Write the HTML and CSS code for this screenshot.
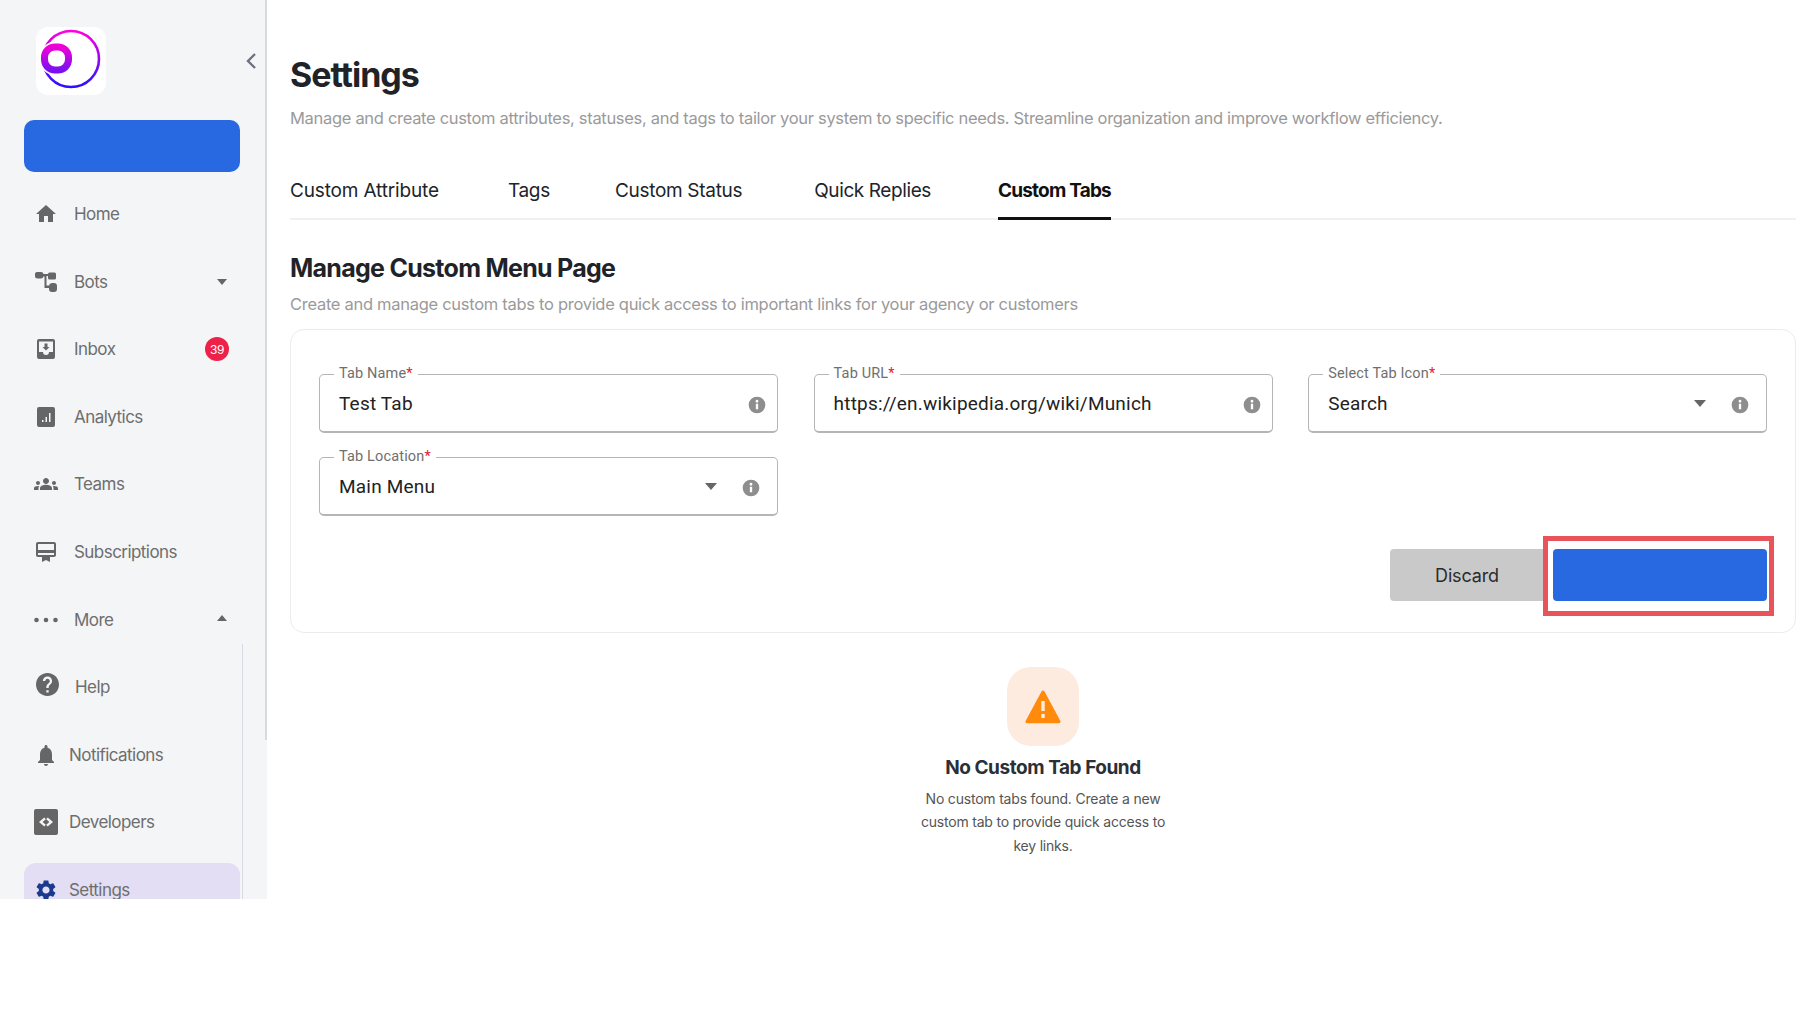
FILE: index.html
```html
<!DOCTYPE html>
<html lang="en">
<head>
<meta charset="utf-8">
<title>Settings</title>
<link rel="stylesheet" href="styles.css">
</head>
<body>
<div class="app">
  <aside class="sidebar">
    <div class="scroll-thumb"></div>
    <div class="brand">
      <div class="logo">
        <svg viewBox="0 0 70 68" width="70" height="68">
          <defs>
            <linearGradient id="lg" x1="0" y1="0" x2="0" y2="1">
              <stop offset="0" stop-color="#ff00e0"/>
              <stop offset="1" stop-color="#2a10ff"/>
            </linearGradient>
            <linearGradient id="lg2" x1="0" y1="0" x2="0" y2="1">
              <stop offset="0" stop-color="#f000d8"/>
              <stop offset="1" stop-color="#7a10f0"/>
            </linearGradient>
          </defs>
          <circle cx="35" cy="32" r="28" fill="none" stroke="url(#lg)" stroke-width="2.600"/>
          <rect x="8.500" y="19.500" width="24" height="24" rx="10.500" fill="none" stroke="#fff" stroke-width="9.500"/>
          <rect x="8.500" y="20" width="24" height="23" rx="10.500" fill="none" stroke="url(#lg2)" stroke-width="7"/>
        </svg>
      </div>
      <svg class="collapse" viewBox="0 0 12 18" width="12" height="18"><path d="M10 2 3 9l7 7" fill="none" stroke="#6b7280" stroke-width="2.400"/></svg>
    </div>
    <div class="create-btn"></div>
    <nav class="nav">
      <a class="nav-item"><span class="nav-icon"><svg viewBox="0 0 24 24"><path d="M10 20v-6h4v6h5v-8h3L12 3 2 12h3v8z"/></svg></span><span class="nav-label">Home</span></a>
      <a class="nav-item"><span class="nav-icon"><svg viewBox="0 0 24 24"><path d="M1 3.500a2 2 0 0 1 2-1.500h4a2.500 2.500 0 0 1 2.500 2H14a1.500 1.500 0 0 1 1.500-1.500h5A1.500 1.500 0 0 1 22 4v4a1.500 1.500 0 0 1-1.500 1.500h-5A1.500 1.500 0 0 1 14 8V6h-1.500v9.500H15a3 3 0 0 1 3-2.500h2a3 3 0 0 1 3 3v3a3 3 0 0 1-3 3h-2a3 3 0 0 1-3-3v-1h-4.500V6.500H9.500A2.500 2.500 0 0 1 7 8.500H3.500A2.500 2.500 0 0 1 1 6z"/></svg></span><span class="nav-label">Bots</span><span class="caret-down"></span></a>
      <a class="nav-item"><span class="nav-icon"><svg viewBox="0 0 24 24"><path d="M19 2H5a2 2 0 0 0-2 2v16a2 2 0 0 0 2 2h14a2 2 0 0 0 2-2V4a2 2 0 0 0-2-2zm0 13h-4a3 3 0 0 1-6 0H5V4.500h14zm-3.500-5h-2V6.500h-3V10h-2l3.500 3.500z"/></svg></span><span class="nav-label">Inbox</span><span class="badge">39</span></a>
      <a class="nav-item"><span class="nav-icon"><svg viewBox="0 0 24 24"><path fill-rule="evenodd" d="M5 2h14a2 2 0 0 1 2 2v16a2 2 0 0 1-2 2H5a2 2 0 0 1-2-2V4a2 2 0 0 1 2-2zm3 13v2h1.500v-2zm3.500-3v5H13v-5zM15 8v9h1.500V8z"/></svg></span><span class="nav-label">Analytics</span></a>
      <a class="nav-item"><span class="nav-icon"><svg viewBox="0 0 24 24"><path d="M12 12.750c1.630 0 3.070.39 4.240.9 1.080.48 1.760 1.560 1.760 2.730V18H6v-1.610c0-1.180.68-2.260 1.760-2.730 1.170-.52 2.610-.91 4.240-.91zM4 13c1.100 0 2-.9 2-2s-.9-2-2-2-2 .9-2 2 .9 2 2 2zm1.130 1.100c-.37-.06-.74-.1-1.130-.1-.99 0-1.930.21-2.780.58C.48 14.900 0 15.620 0 16.430V18h4.500v-1.610c0-.83.23-1.610.63-2.290zM20 13c1.100 0 2-.9 2-2s-.9-2-2-2-2 .9-2 2 .9 2 2 2zm4 3.430c0-.81-.48-1.530-1.220-1.850-.85-.37-1.790-.58-2.780-.58-.39 0-.76.04-1.130.1.4.68.63 1.460.63 2.290V18H24v-1.570zM12 6c1.660 0 3 1.340 3 3s-1.340 3-3 3-3-1.340-3-3 1.340-3 3-3z"/></svg></span><span class="nav-label">Teams</span></a>
      <a class="nav-item"><span class="nav-icon"><svg viewBox="0 0 24 24"><path d="M20 2H4c-1.110 0-2 .89-2 2v11c0 1.110.89 2 2 2h4v5l4-2 4 2v-5h4c1.110 0 2-.89 2-2V4c0-1.110-.89-2-2-2zm0 13H4v-2h16v2zm0-5H4V4h16v6z"/></svg></span><span class="nav-label">Subscriptions</span></a>
      <a class="nav-item"><span class="nav-icon"><svg viewBox="0 0 24 24"><circle cx="2.500" cy="12" r="2.300"/><circle cx="12" cy="12" r="2.300"/><circle cx="21.500" cy="12" r="2.300"/></svg></span><span class="nav-label">More</span><span class="caret-up"></span></a>
      <div class="subnav">
        <a class="nav-item"><span class="nav-icon nav-icon-lg"><svg viewBox="2 2 20 20"><path d="M12 2C6.480 2 2 6.480 2 12s4.480 10 10 10 10-4.480 10-10S17.520 2 12 2zm1 17h-2v-2h2v2zm2.070-7.750l-.9.920C13.450 12.900 13 13.500 13 15h-2v-.5c0-1.100.45-2.100 1.170-2.830l1.240-1.260c.37-.36.59-.86.59-1.410 0-1.100-.9-2-2-2s-2 .9-2 2H8c0-2.210 1.790-4 4-4s4 1.790 4 4c0 .88-.36 1.680-.93 2.250z"/></svg></span><span class="nav-label">Help</span></a>
        <a class="nav-item nav-item-tight"><span class="nav-icon"><svg viewBox="0 0 24 24"><path d="M12 23c1.100 0 2-.9 2-2h-4c0 1.100.89 2 2 2zm6-6v-6c0-3.070-1.640-5.640-4.500-6.320V3.500c0-.83-.67-1.500-1.500-1.500s-1.500.67-1.500 1.500v1.180C7.630 5.360 6 7.920 6 11v6l-2 2v1h16v-1l-2-2z"/></svg></span><span class="nav-label">Notifications</span></a>
        <a class="nav-item nav-item-tight"><span class="nav-icon"><svg class="dev-icon" viewBox="0 0 24 26"><path fill-rule="evenodd" d="M2 0h20a2 2 0 0 1 2 2v22a2 2 0 0 1-2 2H2a2 2 0 0 1-2-2V2a2 2 0 0 1 2-2zm8.300 8.500L5 13l5.300 4.500 1.500-1.800L8.600 13l3.200-2.700zm3.400 0-1.500 1.800 3.200 2.700-3.200 2.700 1.500 1.800L19 13z"/></svg></span><span class="nav-label">Developers</span></a>
        <a class="nav-item nav-item-tight nav-item-active"><span class="nav-icon"><svg viewBox="0 0 24 24"><path d="M19.140 12.940c.04-.3.06-.61.06-.94 0-.32-.02-.64-.07-.94l2.030-1.580c.18-.14.23-.41.12-.61l-1.920-3.320c-.12-.22-.37-.29-.59-.22l-2.390.96c-.5-.38-1.030-.7-1.620-.94l-.36-2.540c-.04-.24-.24-.41-.48-.41h-3.840c-.24 0-.43.17-.47.41l-.36 2.540c-.59.24-1.130.57-1.620.94l-2.390-.96c-.22-.08-.47 0-.59.22L2.740 8.870c-.12.21-.08.47.12.61l2.030 1.580c-.05.3-.09.63-.09.94s.02.64.07.94l-2.030 1.580c-.18.14-.23.41-.12.61l1.920 3.320c.12.22.37.29.59.22l2.390-.96c.5.38 1.030.7 1.620.94l.36 2.540c.05.24.24.41.48.41h3.840c.24 0 .44-.17.47-.41l.36-2.540c.59-.24 1.130-.56 1.620-.94l2.390.96c.22.08.47 0 .59-.22l1.920-3.320c.12-.22.07-.47-.12-.61l-2.010-1.580zM12 15.600c-1.980 0-3.600-1.620-3.600-3.600s1.620-3.600 3.600-3.600 3.600 1.620 3.600 3.600-1.620 3.600-3.600 3.600z"/></svg></span><span class="nav-label">Settings</span></a>
      </div>
    </nav>
  </aside>
  <main class="main">
    <h1 class="page-title">Settings</h1>
    <p class="page-sub">Manage and create custom attributes, statuses, and tags to tailor your system to specific needs. Streamline organization and improve workflow efficiency.</p>
    <div class="tabs">
      <span class="tab tab-1">Custom Attribute</span>
      <span class="tab tab-2">Tags</span>
      <span class="tab tab-3">Custom Status</span>
      <span class="tab tab-4">Quick Replies</span>
      <span class="tab tab-active">Custom Tabs</span>
    </div>
    <h2 class="section-title">Manage Custom Menu Page</h2>
    <p class="section-sub">Create and manage custom tabs to provide quick access to important links for your agency or customers</p>
    <section class="card">
      <div class="form-grid">
        <fieldset class="field">
          <legend>Tab Name<b>*</b></legend>
          <span class="value">Test Tab</span>
          <svg class="info info-plain" viewBox="0 0 24 24"><path d="M12 2a10 10 0 1 0 0 20 10 10 0 0 0 0-20zm1.400 15h-2.800v-6.500h2.800zM12 9.200a1.700 1.700 0 1 1 0-3.400 1.700 1.700 0 0 1 0 3.400z"/></svg>
        </fieldset>
        <fieldset class="field">
          <legend>Tab URL<b>*</b></legend>
          <span class="value">https://en.wikipedia.org/wiki/Munich</span>
          <svg class="info info-plain" viewBox="0 0 24 24"><path d="M12 2a10 10 0 1 0 0 20 10 10 0 0 0 0-20zm1.400 15h-2.800v-6.500h2.800zM12 9.200a1.700 1.700 0 1 1 0-3.400 1.700 1.700 0 0 1 0 3.400z"/></svg>
        </fieldset>
        <fieldset class="field">
          <legend>Select Tab Icon<b>*</b></legend>
          <span class="value">Search</span>
          <span class="select-caret"></span>
          <svg class="info" viewBox="0 0 24 24"><path d="M12 2a10 10 0 1 0 0 20 10 10 0 0 0 0-20zm1.400 15h-2.800v-6.500h2.800zM12 9.200a1.700 1.700 0 1 1 0-3.400 1.700 1.700 0 0 1 0 3.400z"/></svg>
        </fieldset>
        <fieldset class="field">
          <legend>Tab Location<b>*</b></legend>
          <span class="value">Main Menu</span>
          <span class="select-caret"></span>
          <svg class="info" viewBox="0 0 24 24"><path d="M12 2a10 10 0 1 0 0 20 10 10 0 0 0 0-20zm1.400 15h-2.800v-6.500h2.800zM12 9.200a1.700 1.700 0 1 1 0-3.400 1.700 1.700 0 0 1 0 3.400z"/></svg>
        </fieldset>
      </div>
      <div class="actions">
        <div class="btn btn-discard">Discard</div>
        <div class="btn btn-save"></div>
      </div>
    </section>
    <section class="empty">
      <div class="empty-icon">
        <svg viewBox="0 0 36 34" width="36" height="34"><path fill-rule="evenodd" d="M18 0.500c.6 0 1.100.3 1.400.8l16 29.700c.5 1-.2 2.200-1.400 2.200H2c-1.200 0-1.900-1.200-1.400-2.200l16-29.700c.3-.5.8-.8 1.400-.8zM16.300 11v10h3.400V11zm0 13v4h3.400v-4z" fill="#ff8a0c"/></svg>
      </div>
      <h3 class="empty-title">No Custom Tab Found</h3>
      <p class="empty-text">No custom tabs found. Create a new custom tab to provide quick access to key links.</p>
    </section>
  </main>
</div>
</body>
</html>
```
FILE: styles.css
```css
* { box-sizing: border-box; }
html, body { margin: 0; padding: 0; background: #fff; }
body { width: 1806px; height: 1020px; overflow: hidden; font-family: "Inter", "Liberation Sans", sans-serif; }

.app { display: flex; height: 899px; overflow: hidden; }

.sidebar { position: relative; flex: 0 0 267px; background: #f3f5f7; padding: 27px 27px 0 24px; overflow: hidden; }
.scroll-thumb { position: absolute; top: 0; right: 0; width: 2px; height: 740px; background: #d7dae0; }
.brand { display: flex; align-items: center; justify-content: space-between; height: 68px; padding-left: 12px; }
.logo { width: 70px; height: 68px; background: #fff; border-radius: 12px; }
.logo svg { display: block; }
.collapse { margin-right: -17px; }
.create-btn { height: 52px; margin-top: 25px; background: #2868e0; border-radius: 10px; }

.nav { display: flex; flex-direction: column; gap: 13.6px; margin-top: 15px; }
.subnav { display: flex; flex-direction: column; gap: 13.6px; margin-right: -3px; border-right: 1px solid #d8dbe6; margin-top: -16px; padding-top: 16px; padding-right: 2px; }
.nav-item { display: flex; align-items: center; flex: 0 0 54px; height: 54px; padding: 0 10px; color: #6e6e6e; font-size: 17px; letter-spacing: -.55px; border-radius: 12px; }
.nav-icon { flex: 0 0 24px; width: 24px; height: 24px; display: flex; align-items: center; justify-content: center; margin-right: 16px; }
.nav-icon svg { width: 24px; height: 24px; fill: #666; display: block; }
.nav-icon-lg { margin-right: 17px; }
.nav-icon-lg svg { width: 23px; height: 23px; transform: translate(1px, -3px); }
.nav-item-tight .nav-icon { margin-right: 11px; }
.nav-item-tight .dev-icon { width: 24px; height: 26px; }
.nav-item-active { background: #e3def3; }
.nav-item-active svg { fill: #1a3a8e; }
.nav-label { flex: 1; }
.caret-down, .caret-up { width: 0; height: 0; margin-right: 3px; border-left: 5px solid transparent; border-right: 5px solid transparent; }
.caret-down { border-top: 6px solid #666; }
.caret-up { border-bottom: 6px solid #666; margin-top: -4px; }
.badge { width: 24px; height: 24px; margin-right: 1px; border-radius: 50%; background: #ee2148; color: #fff; font-size: 12px; letter-spacing: -.5px; display: flex; align-items: center; justify-content: center; }

.main { flex: 1; min-width: 0; padding: 0 10px 0 23px; color: #1f2328; }
.page-title { margin: 52px 0 0; font-size: 34px; line-height: 46px; font-weight: 700; letter-spacing: -1.05px; }
.page-sub { margin: 8px 0 0; font-size: 16.500px; line-height: 24px; color: #9a9a9a; letter-spacing: -.31px; }
.tabs { display: flex; height: 62px; margin-top: 28px; border-bottom: 2px solid #f0f0f0; font-size: 19px; color: #20242a; letter-spacing: -.3px; }
.tab { height: 62px; padding-top: 20px; line-height: 26px; }
.tab-1 { margin-right: 69px; letter-spacing: -.15px; }
.tab-2 { margin-right: 65px; }
.tab-3 { margin-right: 72px; }
.tab-4 { margin-right: 67px; letter-spacing: -.4px; }
.tab-active { font-weight: 700; color: #111; border-bottom: 3px solid #111; letter-spacing: -.8px; }

.section-title { margin: 31px 0 0; font-size: 25px; line-height: 34px; font-weight: 700; letter-spacing: -.72px; }
.section-sub { margin: 7px 0 0; font-size: 16.500px; line-height: 24px; color: #9a9a9a; letter-spacing: -.29px; }

.card { margin: 13px 0 0 0; height: 304px; padding: 35px 28px 0 28px; border: 1px solid #ececec; border-radius: 14px; position: relative; }
.form-grid { display: grid; grid-template-columns: repeat(3, 459px); column-gap: 35.600px; row-gap: 15px; }
.field { display: flex; align-items: center; position: relative; margin: 0; min-width: 0; height: 68px; padding: 0 18px 8px 19px; border: 1px solid #b5b5b5; border-bottom-width: 2px; border-radius: 5px; }
.field legend { margin-left: -5px; padding: 0 5px; font-family: "Roboto", sans-serif; font-size: 14.500px; line-height: 18px; color: #6f6f6f; letter-spacing: .15px; }
.field legend b { color: #e5202e; font-weight: 400; }
.value { flex: 1; font-family: "Roboto", sans-serif; font-size: 19px; color: #222; letter-spacing: .2px; }
.info { width: 20px; height: 20px; fill: #8e8e8e; margin-right: -2px; margin-top: 4px; }
.info-plain { margin-right: -8px; }
.select-caret { width: 0; height: 0; margin-right: 24px; border-left: 6.500px solid transparent; border-right: 6.500px solid transparent; border-top: 7px solid #666; }

.actions { display: flex; justify-content: flex-end; margin-top: 33px; }
.btn { height: 52px; }
.btn-discard { width: 154px; background: #c9c9c9; color: #2b2b2b; font-size: 18px; letter-spacing: -.15px; display: flex; align-items: center; justify-content: center; border-radius: 4px 0 0 4px; }
.btn-save { position: relative; width: 214px; margin-left: 9px; background: #2868e0; border-radius: 4px; }
.btn-save::after { content: ""; position: absolute; left: -10px; right: -7px; top: -13px; bottom: -15px; border: 5px solid #e8545a; }

.empty { width: 260px; margin: 34px auto 0; display: flex; flex-direction: column; align-items: center; text-align: center; }
.empty-icon { width: 72px; height: 79px; background: #fdebdf; border-radius: 24px; display: flex; align-items: center; justify-content: center; }
.empty-title { margin: 8px 0 0; font-size: 19px; line-height: 28px; font-weight: 700; color: #2b2f36; letter-spacing: -.45px; white-space: nowrap; }
.empty-text { margin: 5px 0 0; font-size: 14px; line-height: 23.300px; color: #555; letter-spacing: -.2px; }
```
